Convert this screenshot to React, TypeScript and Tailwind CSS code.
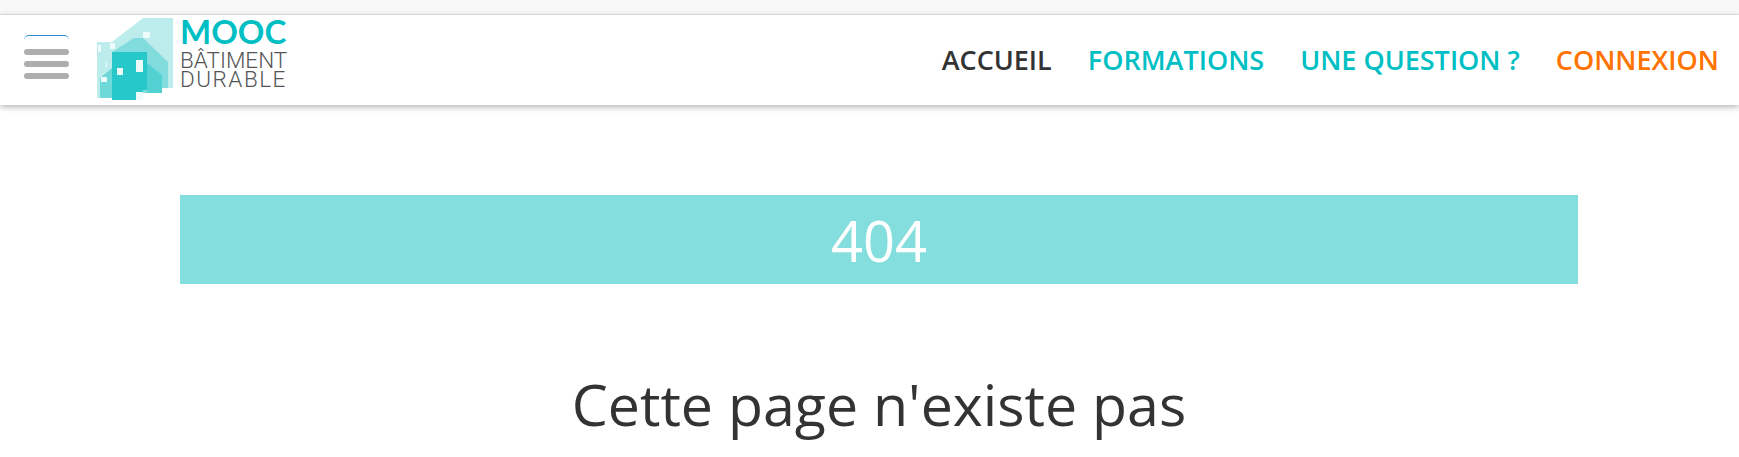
const navLinks = [
  { label: "ACCUEIL", color: "text-[#333333]" },
  { label: "FORMATIONS", color: "text-[#00bfc4]" },
  { label: "UNE QUESTION ?", color: "text-[#00bfc4]" },
  { label: "CONNEXION", color: "text-[#ff7300]" },
];

function LogoMark() {
  return (
    <svg width="78" height="84" viewBox="96 17 78 84" className="shrink-0 blur-[0.5px]">
      <path d="M143 18H173V88H143V98H97V42H112Z" fill="#bdeced" />
      <path d="M112 52L134 38H143L168 62V88H162V93H112Z" fill="#80dcdd" />
      <path d="M100 78L112 68V98H100Z" fill="#6fd8d9" />
      <path d="M112 52H147V90H143V100H112Z" fill="#27c8c9" />
      <path d="M147 63L162 75V93H147Z" fill="#52d1d2" />
      <g fill="#eefbfb">
        <rect x="143" y="32" width="7" height="6" />
        <rect x="110" y="43" width="5" height="6" />
        <rect x="98" y="45" width="3" height="7" />
        <rect x="106" y="62" width="1" height="5" />
        <rect x="117" y="68" width="6" height="7" />
        <rect x="136" y="60" width="7" height="12" />
        <rect x="101" y="77" width="6" height="5" />
        <rect x="136" y="92" width="7" height="8" />
      </g>
    </svg>
  );
}

function Logo() {
  return (
    <a className="flex items-start ml-[27px] -mt-[3px]">
      <LogoMark />
      <div className="ml-[6px] w-[106px] text-[#555555]">
        <div className="font-['Lato',sans-serif] text-[33px] leading-[28px] font-bold text-[#00bfc4]">MOOC</div>
        <div className="font-['Roboto',sans-serif] font-light text-[22.5px] leading-[19px] mt-[6px] whitespace-nowrap">BÂTIMENT</div>
        <div className="font-['Roboto',sans-serif] font-light text-[22.5px] leading-[19px] tracking-[1.5px] whitespace-nowrap">DURABLE</div>
      </div>
    </a>
  );
}

export default function App() {
  return (
    <div className="min-h-[457px] bg-white overflow-hidden font-['Open_Sans',sans-serif]">
      <div className="h-[15px] bg-[#f8f8f8] border-b border-[#e4e4e4]" />
      <header className="h-[90px] flex items-center justify-between bg-white shadow-[0_2px_6px_rgba(0,0,0,0.3)] pl-[24px] pr-[20px]">
        <div className="flex items-center">
          <button type="button" className="w-[45px] pt-[13px] border-t border-[#2a8fd0] rounded-t-[5px] flex flex-col gap-[6px] -mt-[6px]">
            <span className="block h-[6px] rounded-full bg-[#aeaeae]" />
            <span className="block h-[6px] rounded-full bg-[#aeaeae]" />
            <span className="block h-[6px] rounded-full bg-[#aeaeae]" />
          </button>
          <Logo />
        </div>
        <nav className="flex items-center gap-[36px] mt-[1px]">
          {navLinks.map((link) => (
            <a key={link.label} className={`text-[27px] font-semibold whitespace-nowrap ${link.color}`}>
              {link.label}
            </a>
          ))}
        </nav>
      </header>
      <main className="pl-[180px] pr-[161px] pt-[90px]">
        <div className="h-[89px] flex items-center justify-center bg-[#84dede] text-white text-[56px] leading-none">
          404
        </div>
        <h1 className="mt-[82px] text-center text-[57.3px] leading-[76px] text-[#333333]">Cette page n'existe pas</h1>
      </main>
    </div>
  );
}
